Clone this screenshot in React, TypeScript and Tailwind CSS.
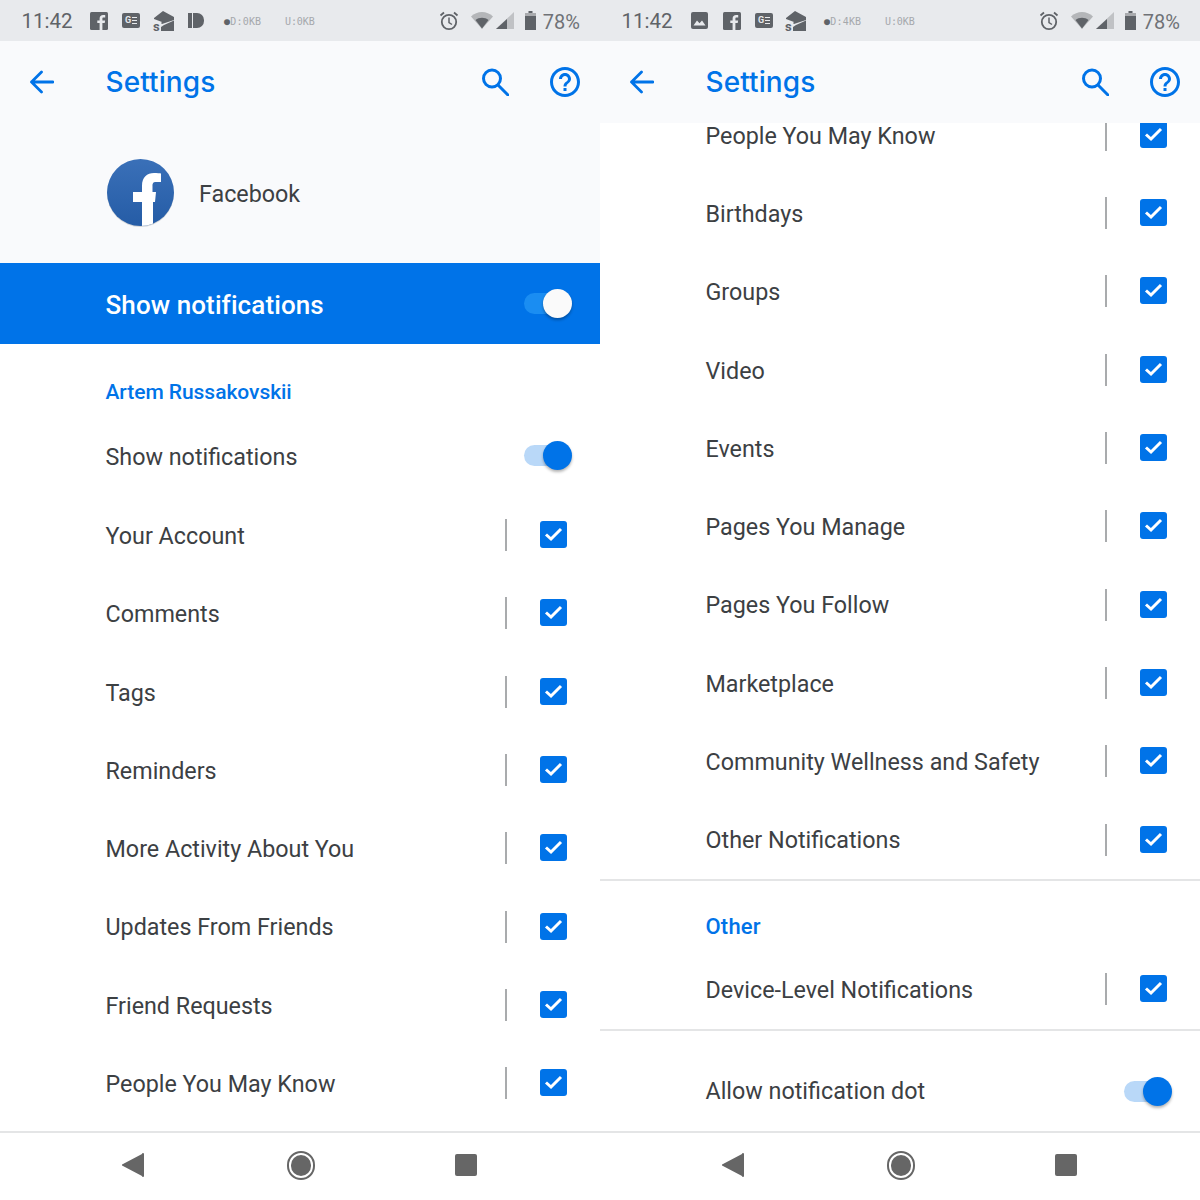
const labels = ['Your Account', 'Comments', 'Tags', 'Reminders', 'More Activity About You', 'Updates From Friends', 'Friend Requests', 'People You May Know'];
const rightLabels = ['People You May Know', 'Birthdays', 'Groups', 'Video', 'Events', 'Pages You Manage', 'Pages You Follow', 'Marketplace', 'Community Wellness and Safety', 'Other Notifications'];

function FIcon() {
  return (
    <svg width="18" height="18" viewBox="0 0 18 18" className="block">
      <rect width="18" height="18" rx="1.5" fill="#5f6368" />
      <path d="M12.4 18v-6.9h2.3l.4-2.7h-2.7V6.7c0-.8.2-1.3 1.3-1.3h1.5V3c-.3 0-1.100-.1-2.100-.1-2.100 0-3.500 1.300-3.500 3.600v1.900H7.300v2.700h2.300V18z" fill="#e8eaed" />
    </svg>
  );
}

function GeIcon() {
  return (
    <div className="flex h-[15px] w-[18px] items-center justify-center gap-[1px] rounded-[2px] bg-[#5f6368]">
      <span className="text-[9px] leading-none font-bold text-[#e8eaed]">G</span>
      <span className="flex flex-col gap-[2px]">
        <span className="block h-[1px] w-[5px] bg-[#e8eaed]" />
        <span className="block h-[1px] w-[5px] bg-[#e8eaed]" />
        <span className="block h-[1px] w-[5px] bg-[#e8eaed]" />
      </span>
    </div>
  );
}

function MailSIcon() {
  return (
    <div className="relative h-[22px] w-[22px]">
      <svg width="22" height="22" viewBox="0 0 22 22" className="block">
        <path d="M1 8 10 1l11 6v3L9 14l-1-1 1-1-8-3z" fill="#5f6368" />
        <path d="M21 10.500V21H8v-4l3-2z" fill="#5f6368" />
      </svg>
      <span className="absolute -bottom-[1px] left-0 text-[13px] leading-none font-bold text-[#5f6368]">s</span>
    </div>
  );
}

function IdIcon() {
  return (
    <div className="flex h-[15px] items-center gap-[1px]">
      <div className="h-[15px] w-[4px] bg-[#5f6368]" />
      <div className="h-[15px] w-[11px] rounded-r-[7px] bg-[#5f6368]" />
    </div>
  );
}

function ImageIcon() {
  return (
    <svg width="17" height="17" viewBox="0 0 17 17" className="block">
      <rect width="17" height="17" rx="2" fill="#5f6368" />
      <path d="M2.500 13.500 6 8.500l2.500 2.700L11 8.500l3.500 5z" fill="#e8eaed" />
    </svg>
  );
}

function AlarmIcon() {
  return (
    <svg width="20" height="20" viewBox="0 0 20 20" fill="none" stroke="#5f6368" className="block">
      <circle cx="10" cy="11" r="7.200" strokeWidth="1.800" />
      <path d="M10 6.500V11.500L13 13.500" strokeWidth="1.500" />
      <path d="M1.500 4.500 5 1.500M18.500 4.500 15 1.500" strokeWidth="1.800" />
    </svg>
  );
}

function StatusRight() {
  return (
    <div className="flex items-center">
      <AlarmIcon />
      <svg width="22" height="17" viewBox="0 0 22 17" className="ml-[12px] block">
        <path d="M0 4.500C6 -1.500 16 -1.500 22 4.500L11 17z" fill="#b4b6b9" />
        <path d="M4.500 8C8 5 14 5 17.500 8L11 16.500z" fill="#5f6368" />
      </svg>
      <svg width="18" height="17" viewBox="0 0 18 17" className="ml-[3px] block">
        <path d="M18 0V17H0z" fill="#c0c2c5" />
        <path d="M11 7V17H0l11-10z" fill="#5f6368" />
      </svg>
      <svg width="11" height="19" viewBox="0 0 11 19" className="ml-[11px] block">
        <path d="M3.500 0h4v2H11v17H0V2h3.500z" fill="#5f6368" />
        <rect x="0" y="2" width="11" height="3" fill="#a9abae" />
      </svg>
      <span className="ml-[7px] pt-[2px] text-[20px] leading-none text-[#6f7276]">78%</span>
    </div>
  );
}

function Speed({ down }: { down: string }) {
  return (
    <>
      <span className="w-[61px] pt-[2px] font-['DejaVu_Sans_Mono',monospace] text-[10px] leading-none tracking-[0.2px] text-[#a5a8ac]">
        <span className="text-[#5f6368]">●</span>{down}
      </span>
      <span className="pt-[2px] font-['DejaVu_Sans_Mono',monospace] text-[10px] leading-none tracking-[-0.1px] text-[#a5a8ac]">U:0KB</span>
    </>
  );
}

function StatusBar({ right }: { right?: boolean }) {
  return (
    <div className="flex h-[41px] items-center justify-between bg-[#e8eaed] pr-[20px] pl-[21.5px]">
      <div className="flex items-center">
        <span className="w-[68.500px] pt-[2px] text-[20.500px] leading-none text-[#5f6368]">11:42</span>
        {right ? (
          <>
            <div className="ml-[1px] w-[32px]"><ImageIcon /></div>
            <div className="w-[32px]"><FIcon /></div>
            <div className="w-[30px]"><GeIcon /></div>
            <div className="w-[39px]"><MailSIcon /></div>
            <Speed down="D:4KB" />
          </>
        ) : (
          <>
            <div className="w-[32px]"><FIcon /></div>
            <div className="w-[31px]"><GeIcon /></div>
            <div className="w-[35px]"><MailSIcon /></div>
            <div className="w-[36px]"><IdIcon /></div>
            <Speed down="D:0KB" />
          </>
        )}
      </div>
      <StatusRight />
    </div>
  );
}

function AppBar() {
  return (
    <div className="flex h-[82px] items-center bg-[#f9fafc] pr-[17.5px] pl-[30px]">
      <svg width="24" height="24" viewBox="0 0 24 24" fill="none" stroke="#0073e8" strokeWidth="2.800" strokeLinecap="round" strokeLinejoin="round" className="block">
        <path d="M1.500 12H23M11.500 2 1.500 12l10 10" />
      </svg>
      <span className="ml-[51.5px] flex-1 font-['Inter',sans-serif] text-[28px] leading-none font-medium tracking-[0.1px] text-[#0073e8]">Settings</span>
      <svg width="28" height="28" viewBox="0 0 28 28" fill="none" stroke="#0073e8" strokeWidth="3" strokeLinecap="round" className="mr-[37.5px] block">
        <circle cx="11" cy="10.500" r="8.500" />
        <path d="M17 17 27 27" />
      </svg>
      <svg width="36" height="36" viewBox="0 0 24 24" fill="#0073e8" className="block">
        <path d="M11 18h2v-2h-2v2zm1-16C6.480 2 2 6.480 2 12s4.480 10 10 10 10-4.480 10-10S17.520 2 12 2zm0 18c-4.410 0-8-3.590-8-8s3.590-8 8-8 8 3.590 8 8-3.590 8-8 8zm0-14c-2.210 0-4 1.790-4 4h2c0-1.100.9-2 2-2s2 .9 2 2c0 2-3 1.750-3 5h2c0-2.250 3-2.500 3-5 0-2.210-1.790-4-4-4z" />
      </svg>
    </div>
  );
}

function Check() {
  return (
    <div className="flex h-[27px] w-[27px] items-center justify-center rounded-[3px] bg-[#0073e8]">
      <svg width="19" height="15" viewBox="0 0 19 15" fill="none" stroke="#fff" strokeWidth="3" className="block">
        <path d="M2 7.500 7 12 17 2" />
      </svg>
    </div>
  );
}

function CheckRow({ label }: { label: string }) {
  return (
    <div className="flex h-[78.33px] shrink-0 items-center pr-[33px] pl-[105.5px]">
      <span className="flex-1 pt-[2px] text-[23.300px] leading-none text-[#3c4043]">{label}</span>
      <div className="mb-[1px] h-[32px] w-[2px] bg-[#a9abad]" />
      <div className="mb-[2px] ml-[33px]"><Check /></div>
    </div>
  );
}

function Toggle({ onBlue }: { onBlue?: boolean }) {
  return (
    <div className="flex items-center">
      <div className={onBlue ? 'h-[21px] w-[36px] rounded-l-full bg-[#1a8df2]' : 'h-[21px] w-[36px] rounded-l-full bg-[#b9d8f8]'} />
      <div className={onBlue ? '-ml-[17px] h-[29px] w-[29px] rounded-full bg-[#fafafa] shadow-[0_2px_3px_rgba(0,0,0,0.3)]' : '-ml-[17px] h-[29px] w-[29px] rounded-full bg-[#0073e8] shadow-[0_2px_3px_rgba(0,0,0,0.3)]'} />
    </div>
  );
}

function NavBar() {
  return (
    <div className="flex h-[69px] shrink-0 items-center border-t-2 border-[#e4e5e6] bg-white pb-[3px] pl-[122px]">
      <svg width="22" height="26" viewBox="0 0 22 26" className="block">
        <path d="M20 2a1 1 0 0 1 2 0v22a1 1 0 0 1-2 0L1 14a1 1 0 0 1 0-2z" fill="#666" />
      </svg>
      <div className="ml-[143px] flex h-[29px] w-[28px] items-center justify-center rounded-full border-2 border-[#666]">
        <div className="h-[21px] w-[20px] rounded-full bg-[#666]" />
      </div>
      <div className="ml-[140px] h-[22px] w-[22px] rounded-[2px] bg-[#666]" />
    </div>
  );
}

function LeftPanel() {
  return (
    <div className="flex h-[1200px] w-[600px] flex-col bg-white">
      <StatusBar />
      <AppBar />
      <div className="flex h-[140px] items-center bg-[#f9fafc] pl-[107px]">
        <svg width="67" height="69" viewBox="0 0 67 69" className="block">
          <defs>
            <linearGradient id="fbg" x1="0" y1="0" x2="0" y2="1">
              <stop offset="0" stopColor="#3a70b8" />
              <stop offset="1" stopColor="#255ca6" />
            </linearGradient>
            <clipPath id="fbc"><circle cx="33.500" cy="33.500" r="33.500" /></clipPath>
          </defs>
          <circle cx="33.500" cy="34.500" r="33.500" fill="#d5d6d8" />
          <circle cx="33.500" cy="33.500" r="33.500" fill="url(#fbg)" />
          <path clipPath="url(#fbc)" d="M35 70V43h-9V33h9v-6c0-9 5-13 12-13 3 0 6 .3 7 .5V23h-5c-3 0-3.500 1.500-3.500 4v6H49l-1 10h-2v27z" fill="#fff" />
        </svg>
        <span className="ml-[25px] pt-[4px] text-[23.300px] leading-none text-[#3c4043]">Facebook</span>
      </div>
      <div className="flex h-[81px] items-center justify-between bg-[#0073e8] pr-[28px] pl-[105.5px]">
        <span className="pt-[3px] text-[26px] leading-none font-medium tracking-[0.1px] text-white">Show notifications</span>
        <Toggle onBlue />
      </div>
      <div className="flex min-h-0 flex-1 flex-col overflow-hidden">
        <div className="flex h-[74px] shrink-0 items-center pt-[23px] pl-[105.5px] text-[21px] leading-none font-medium tracking-[-0.05px] text-[#0073e8]">Artem Russakovskii</div>
        <div className="flex h-[78.33px] shrink-0 items-center justify-between pr-[28px] pl-[105.5px]">
          <span className="pt-[1px] text-[23.300px] leading-none text-[#3c4043]">Show notifications</span>
          <div className="mb-[3px]"><Toggle /></div>
        </div>
        {labels.map((label) => <CheckRow key={label} label={label} />)}
      </div>
      <NavBar />
    </div>
  );
}

function RightPanel() {
  return (
    <div className="flex h-[1200px] w-[600px] flex-col bg-white">
      <StatusBar right />
      <AppBar />
      <div className="flex min-h-0 flex-1 flex-col overflow-hidden">
        <div className="-mt-[27px]">
          {rightLabels.map((label) => <CheckRow key={label} label={label} />)}
        </div>
        <div className="h-[2px] shrink-0 bg-[#e4e5e6]" />
        <div className="flex h-[69.5px] shrink-0 items-center pt-[21px] pl-[105.5px] text-[22px] leading-none font-medium tracking-[0.2px] text-[#0073e8]">Other</div>
        <CheckRow label="Device-Level Notifications" />
        <div className="h-[2px] shrink-0 bg-[#e4e5e6]" />
        <div className="flex h-[120px] shrink-0 items-center justify-between pr-[28px] pl-[105.5px]">
          <span className="pt-[2px] text-[23.300px] leading-none text-[#3c4043]">Allow notification dot</span>
          <Toggle />
        </div>
      </div>
      <NavBar />
    </div>
  );
}

export default function App() {
  return (
    <div className="flex h-[1200px] w-[1200px] overflow-hidden bg-white font-['Roboto',sans-serif]">
      <LeftPanel />
      <RightPanel />
    </div>
  );
}
